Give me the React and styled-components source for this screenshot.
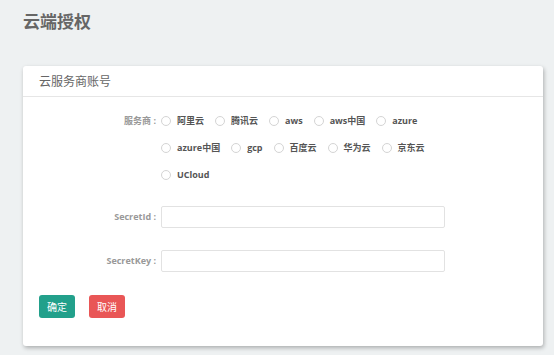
import React, { useState } from 'react'
import styled, { createGlobalStyle } from 'styled-components'

const GlobalStyle = createGlobalStyle`
  html, body {
    margin: 0;
    padding: 0;
    background: #eef1f2;
    font-family: "Open Sans", "Noto Sans CJK SC", sans-serif;
  }
`

const Page = styled.div`
  width: 554px;
  height: 355px;
  padding: 11px 11px 0 23px;
  box-sizing: border-box;
  overflow: hidden;
`

const PageTitle = styled.h1`
  margin: 0;
  font-size: 17px;
  line-height: 22px;
  font-weight: bold;
  color: #666;
`

const Card = styled.div`
  margin-top: 33px;
  width: 520px;
  background: #fff;
  border-radius: 3px;
  box-shadow: 1px 2px 4px rgba(0, 0, 0, 0.28);
`

const CardHeader = styled.div`
  height: 30px;
  line-height: 31px;
  padding-left: 16px;
  font-size: 12px;
  color: #666;
  border-bottom: 1px solid #e6e6e6;
`

const CardBody = styled.div`
  padding: 10px 0 28px;
`

const FormRow = styled.div`
  display: flex;
  align-items: ${p => (p.$top ? 'flex-start' : 'center')};
  margin-top: ${p => p.$gap || 0}px;
`

const Label = styled.div`
  width: 138px;
  padding-right: 5px;
  box-sizing: border-box;
  text-align: right;
  font-size: 9px;
  font-weight: bold;
  color: #999;
  line-height: ${p => (p.$top ? '27px' : '22px')};
  white-space: nowrap;
`

const Options = styled.div`
  width: 290px;
  display: flex;
  flex-wrap: wrap;
`

const Option = styled.label`
  display: flex;
  align-items: center;
  height: 27px;
  margin-right: 11px;
  font-size: 9px;
  font-weight: bold;
  color: #555;
  cursor: pointer;
`

const Circle = styled.span`
  width: 8px;
  height: 8px;
  border: 1px solid ${p => (p.$on ? '#23a08c' : '#d4d4d4')};
  border-radius: 50%;
  margin-right: 6px;
  box-sizing: content-box;
  background: ${p => (p.$on ? 'radial-gradient(#23a08c 35%, #fff 40%)' : '#fff')};
`

const Input = styled.input`
  width: 284px;
  height: 22px;
  box-sizing: border-box;
  border: 1px solid #e2e2e2;
  border-radius: 2px;
  outline: none;
  padding: 0 6px;
  font-size: 10px;
`

const Actions = styled.div`
  display: flex;
  gap: 14px;
  margin-top: 23px;
  padding-left: 16px;
`

const Button = styled.button`
  width: 36px;
  height: 23px;
  border: none;
  border-radius: 3px;
  background: ${p => (p.$danger ? '#e95656' : '#22a08b')};
  color: #fff;
  font-size: 10px;
  font-family: inherit;
  padding: 0;
  cursor: pointer;
`

const providers = ['阿里云', '腾讯云', 'aws', 'aws中国', 'azure', 'azure中国', 'gcp', '百度云', '华为云', '京东云', 'UCloud']

export default function App() {
  const [provider, setProvider] = useState(null)

  return (
    <>
      <GlobalStyle />
      <Page>
        <PageTitle>云端授权</PageTitle>
        <Card>
          <CardHeader>云服务商账号</CardHeader>
          <CardBody>
            <FormRow $top>
              <Label $top>服务商 :</Label>
              <Options>
                {providers.map(name => (
                  <Option key={name} onClick={() => setProvider(name)}>
                    <Circle $on={provider === name} />
                    {name}
                  </Option>
                ))}
              </Options>
            </FormRow>
            <FormRow $gap={18}>
              <Label>SecretId :</Label>
              <Input />
            </FormRow>
            <FormRow $gap={22}>
              <Label>SecretKey :</Label>
              <Input />
            </FormRow>
            <Actions>
              <Button>确定</Button>
              <Button $danger>取消</Button>
            </Actions>
          </CardBody>
        </Card>
      </Page>
    </>
  )
}
